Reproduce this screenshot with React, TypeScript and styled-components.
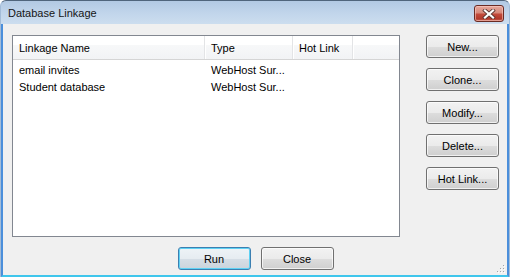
import React from "react";
import styled, { createGlobalStyle } from "styled-components";

const Global = createGlobalStyle`
  html, body { margin: 0; padding: 0; background: #ffffff; }
  body { font-family: "Liberation Sans", Arial, sans-serif; }
  * { box-sizing: border-box; }
`;

const Frame = styled.div`
  width: 510px;
  height: 277px;
  display: flex;
  flex-direction: column;
  border-top: 1px solid #50657c;
  border-left: 1px solid #a3bcd8;
  border-right: 1px solid #a3bcd8;
  border-radius: 6px 6px 0 0;
  background: linear-gradient(180deg, #b2c9e3 0px, #c1d5eb 12px, #cddeef 24px);
  overflow: hidden;
`;

const TitleBar = styled.div`
  height: 23px;
  flex: none;
  display: flex;
  align-items: flex-start;
  justify-content: space-between;
  padding: 4px 5px 0 7px;
`;

const Title = styled.span`
  font-size: 11px;
  line-height: 17px;
  color: #151515;
`;

const CaptionClose = styled.button`
  width: 30px;
  height: 17px;
  padding: 0;
  display: flex;
  align-items: center;
  justify-content: center;
  border: 1px solid #6a2b24;
  border-radius: 3px;
  background: linear-gradient(180deg, #e6a89c 0%, #d7897b 45%, #c2493a 55%, #b23a2c 85%, #c9675a 100%);
  box-shadow: inset 0 0 0 1px rgba(255, 210, 200, 0.55);
`;

const Client = styled.div`
  flex: 1;
  position: relative;
  display: flex;
  flex-direction: column;
  gap: 10px;
  background: #f0f0f0;
  border-left: 2px solid #4b8fdb;
  border-right: 2px solid #4b8fdb;
  border-bottom: 2px solid #3fc6ec;
  padding: 11px 8px 5px 9px;
`;

const MainRow = styled.div`
  height: 202px;
  flex: none;
  display: flex;
  gap: 26px;
`;

const List = styled.div`
  flex: 1;
  display: flex;
  flex-direction: column;
  border: 1px solid #828790;
  background: #ffffff;
`;

const Header = styled.div`
  height: 24px;
  flex: none;
  display: flex;
  border-bottom: 1px solid #d5d5d5;
  background: linear-gradient(180deg, #ffffff 0%, #ffffff 40%, #f7f8f9 41%, #f2f3f5 100%);
`;

const HeaderCell = styled.div<{ $w?: number; $last?: boolean }>`
  ${(p) => (p.$w ? `width: ${p.$w}px; flex: none;` : "flex: 1;")}
  border-right: ${(p) => (p.$last ? "none" : "1px solid #e3e4e6")};
  box-shadow: ${(p) => (p.$last ? "none" : "1px 0 0 #ffffff")};
  padding-left: 6px;
  display: flex;
  align-items: center;
  font-size: 11px;
  color: #000000;
  white-space: nowrap;
`;

const Body = styled.div`
  padding-top: 2px;
  display: flex;
  flex-direction: column;
`;

const Row = styled.div`
  height: 17px;
  display: flex;
`;

const Cell = styled.div<{ $w?: number }>`
  ${(p) => (p.$w ? `width: ${p.$w}px; flex: none;` : "flex: 1;")}
  padding-left: 6px;
  font-size: 11px;
  line-height: 17px;
  color: #000000;
  white-space: nowrap;
  overflow: hidden;
`;

const SideColumn = styled.div`
  width: 73px;
  flex: none;
  display: flex;
  flex-direction: column;
  gap: 10px;
`;

const BottomRow = styled.div`
  display: flex;
  justify-content: center;
  gap: 10px;
`;

const Button = styled.button<{ $default?: boolean }>`
  width: 73px;
  height: 23px;
  flex: none;
  padding: 0;
  font-family: "Liberation Sans", Arial, sans-serif;
  font-size: 11px;
  color: #000000;
  border-radius: 3px;
  border: 1px solid ${(p) => (p.$default ? "#3c7fb1" : "#707070")};
  background: ${(p) =>
    p.$default
      ? "linear-gradient(180deg, #eef3f7 0%, #e6ecf1 50%, #d6dee6 51%, #cbd4dc 100%)"
      : "linear-gradient(180deg, #f2f2f2 0%, #ebebeb 50%, #dddddd 51%, #cfcfcf 100%)"};
  box-shadow: ${(p) =>
    p.$default ? "inset 0 0 0 1px #5ed1f4" : "inset 0 0 0 1px rgba(255,255,255,0.7)"};
`;

const Grip = styled.svg`
  position: absolute;
  right: 1px;
  bottom: 1px;
`;

const rows = [
  { name: "email invites", type: "WebHost Sur...", hot: "" },
  { name: "Student database", type: "WebHost Sur...", hot: "" },
];

export default function App() {
  return (
    <>
      <Global />
      <Frame>
        <TitleBar>
          <Title>Database Linkage</Title>
          <CaptionClose aria-label="Close">
            <svg width="14" height="10" viewBox="0 0 14 10">
              <path d="M3 1.5 L11 8.5 M11 1.5 L3 8.5" stroke="#5a3430" strokeWidth="3.8" strokeLinecap="square" />
              <path d="M3 1.5 L11 8.5 M11 1.5 L3 8.5" stroke="#ffffff" strokeWidth="2.2" strokeLinecap="square" />
            </svg>
          </CaptionClose>
        </TitleBar>
        <Client>
          <MainRow>
            <List>
              <Header>
                <HeaderCell $w={192}>Linkage Name</HeaderCell>
                <HeaderCell $w={88}>Type</HeaderCell>
                <HeaderCell $w={60}>Hot Link</HeaderCell>
                <HeaderCell $last />
              </Header>
              <Body>
                {rows.map((r) => (
                  <Row key={r.name}>
                    <Cell $w={192}>{r.name}</Cell>
                    <Cell $w={88}>{r.type}</Cell>
                    <Cell $w={60}>{r.hot}</Cell>
                    <Cell />
                  </Row>
                ))}
              </Body>
            </List>
            <SideColumn>
              <Button>New...</Button>
              <Button>Clone...</Button>
              <Button>Modify...</Button>
              <Button>Delete...</Button>
              <Button>Hot Link...</Button>
            </SideColumn>
          </MainRow>
          <BottomRow>
            <Button $default>Run</Button>
            <Button>Close</Button>
          </BottomRow>
          <Grip width="10" height="10" viewBox="0 0 10 10">
            {[
              [8, 2],
              [8, 5],
              [5, 5],
              [8, 8],
              [5, 8],
              [2, 8],
            ].map(([x, y]) => (
              <g key={`${x}-${y}`}>
                <rect x={x} y={y} width="1" height="1" fill="#ffffff" />
                <rect x={x - 1} y={y - 1} width="1" height="1" fill="#a0a4a8" />
              </g>
            ))}
          </Grip>
        </Client>
      </Frame>
    </>
  );
}
